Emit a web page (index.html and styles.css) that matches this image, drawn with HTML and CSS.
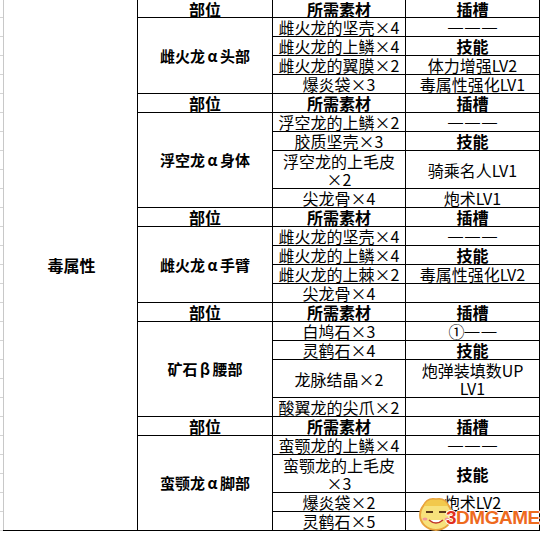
FILE: index.html
```html
<!DOCTYPE html>
<html lang="zh-CN">
<head>
<meta charset="utf-8">
<title>毒属性</title>
<link rel="stylesheet" href="styles.css">
</head>
<body>
<div class="sheet">
  <div class="gutter"></div>
  <div class="table">
    <div class="cell group">毒属性</div>

    <div class="cell head">部位</div><div class="cell head">所需素材</div><div class="cell head">插槽</div>
    <div class="cell part span4">雌火龙<span class="g">α</span>头部</div>
    <div class="cell">雌火龙的坚壳<span class="x">×</span>4</div><div class="cell"><span class="dash">———</span></div>
    <div class="cell">雌火龙的上鳞<span class="x">×</span>4</div><div class="cell head">技能</div>
    <div class="cell">雌火龙的翼膜<span class="x">×</span>2</div><div class="cell">体力增强LV2</div>
    <div class="cell">爆炎袋<span class="x">×</span>3</div><div class="cell">毒属性强化LV1</div>

    <div class="cell head">部位</div><div class="cell head">所需素材</div><div class="cell head">插槽</div>
    <div class="cell part span5">浮空龙<span class="g">α</span>身体</div>
    <div class="cell">浮空龙的上鳞<span class="x">×</span>2</div><div class="cell"><span class="dash">———</span></div>
    <div class="cell">胶质坚壳<span class="x">×</span>3</div><div class="cell head">技能</div>
    <div class="cell span2"><span class="lines">浮空龙的上毛皮<br><span class="x">×</span>2</span></div><div class="cell span2">骑乘名人LV1</div>
    <div class="cell">尖龙骨<span class="x">×</span>4</div><div class="cell">炮术LV1</div>

    <div class="cell head">部位</div><div class="cell head">所需素材</div><div class="cell head">插槽</div>
    <div class="cell part span4">雌火龙<span class="g">α</span>手臂</div>
    <div class="cell">雌火龙的坚壳<span class="x">×</span>4</div><div class="cell"><span class="dash">———</span></div>
    <div class="cell">雌火龙的上鳞<span class="x">×</span>4</div><div class="cell head">技能</div>
    <div class="cell">雌火龙的上棘<span class="x">×</span>2</div><div class="cell">毒属性强化LV2</div>
    <div class="cell">尖龙骨<span class="x">×</span>4</div><div class="cell"></div>

    <div class="cell head">部位</div><div class="cell head">所需素材</div><div class="cell head">插槽</div>
    <div class="cell part span5">矿石<span class="g">β</span>腰部</div>
    <div class="cell">白鸠石<span class="x">×</span>3</div><div class="cell"><span>①</span><span class="dash">——</span></div>
    <div class="cell">灵鹤石<span class="x">×</span>4</div><div class="cell head">技能</div>
    <div class="cell span2">龙脉结晶<span class="x">×</span>2</div><div class="cell span2 top"><span class="lines">炮弹装填数UP<br>LV1</span></div>
    <div class="cell">酸翼龙的尖爪<span class="x">×</span>2</div><div class="cell"></div>

    <div class="cell head">部位</div><div class="cell head">所需素材</div><div class="cell head">插槽</div>
    <div class="cell part span5">蛮颚龙<span class="g">α</span>脚部</div>
    <div class="cell">蛮颚龙的上鳞<span class="x">×</span>4</div><div class="cell"><span class="dash">———</span></div>
    <div class="cell span2"><span class="lines">蛮颚龙的上毛皮<br><span class="x">×</span>3</span></div><div class="cell span2 head">技能</div>
    <div class="cell">爆炎袋<span class="x">×</span>2</div><div class="cell">炮术LV2</div>
    <div class="cell">灵鹤石<span class="x">×</span>5</div><div class="cell"></div>
  </div>
</div>
<div class="mark">
  <svg class="face" width="36" height="38" viewBox="0 0 36 38">
    <ellipse cx="18" cy="21" rx="16" ry="15" fill="#f7e27c" stroke="#e9a33d" stroke-width="2"/>
    <path d="M5 12 Q9 3 18 5 Q27 3 31 12" fill="#f2c94c" stroke="#e9a33d" stroke-width="1.5"/>
    <path d="M8 18 h7 M21 18 h7" stroke="#5a3a1a" stroke-width="1.8"/>
    <path d="M11 26 Q18 32 25 26" fill="#fff" stroke="#c0392b" stroke-width="1.6"/>
    <ellipse cx="7" cy="25" rx="2.5" ry="1.5" fill="#f29a9a"/>
    <ellipse cx="29" cy="25" rx="2.5" ry="1.5" fill="#f29a9a"/>
  </svg>
  <span class="logo"><span class="three">3</span>DMGAME</span>
</div>
</body>
</html>
```
FILE: styles.css
```css
* {
  box-sizing: border-box;
  margin: 0;
  padding: 0;
}

html, body {
  background: #fff;
}

body {
  margin: 0;
  font-family: "Noto Sans CJK SC", sans-serif;
  font-size: 16px;
  color: #000;
}

.sheet {
  display: flex;
  align-items: flex-start;
  width: 544px;
  height: 534px;
  overflow: hidden;
}

.gutter {
  flex: none;
  width: 3px;
  height: 531px;
  background: repeating-linear-gradient(to bottom, #fff 0 17px, #d4d4d4 17px 18px, #fff 18px 19px);
}

.table {
  display: grid;
  grid-template-columns: 134px 134px 132px 133px;
  grid-template-rows: 17px repeat(27, 18px);
  gap: 1px;
  background: #000;
  border-right: 1px solid #000;
  border-bottom: 1px solid #000;
}

.cell {
  background: #fff;
  display: flex;
  align-items: center;
  justify-content: center;
  text-align: center;
  line-height: 18px;
  white-space: nowrap;
  overflow: hidden;
  font-weight: 400;
}

.lines {
  display: block;
  text-align: center;
}

.group {
  grid-row: span 28;
  border-left: 1px solid #c8c8c8;
  font-weight: 700;
  padding-left: 2px;
}

.head {
  font-weight: 700;
}

.part {
  font-weight: 700;
  font-size: 15px;
}

.span2 {
  grid-row: span 2;
}

.span4 {
  grid-row: span 4;
}

.span5 {
  grid-row: span 5;
}

.top {
  align-items: flex-start;
  padding-top: 1px;
}

.x,
.g {
  display: inline-block;
  width: 1em;
  text-align: center;
}

.dash {
  font-family: "Liberation Sans", sans-serif;
  font-size: 15px;
  letter-spacing: 2px;
  margin-right: -2px;
  font-weight: 400;
}

.mark {
  position: absolute;
  left: 418px;
  top: 494px;
  display: flex;
  align-items: flex-end;
  pointer-events: none;
}

.face {
  display: block;
}

.logo {
  font-family: "Liberation Sans", Arial, sans-serif;
  font-weight: 700;
  font-size: 19px;
  line-height: 20px;
  color: #ee6a1e;
  margin-left: -8px;
  margin-bottom: 4px;
  letter-spacing: -0.5px;
  text-shadow: 1px 0 #fff, -1px 0 #fff, 0 1px #fff, 0 -1px #fff;
}

.three {
  color: #e0301e;
}
```
